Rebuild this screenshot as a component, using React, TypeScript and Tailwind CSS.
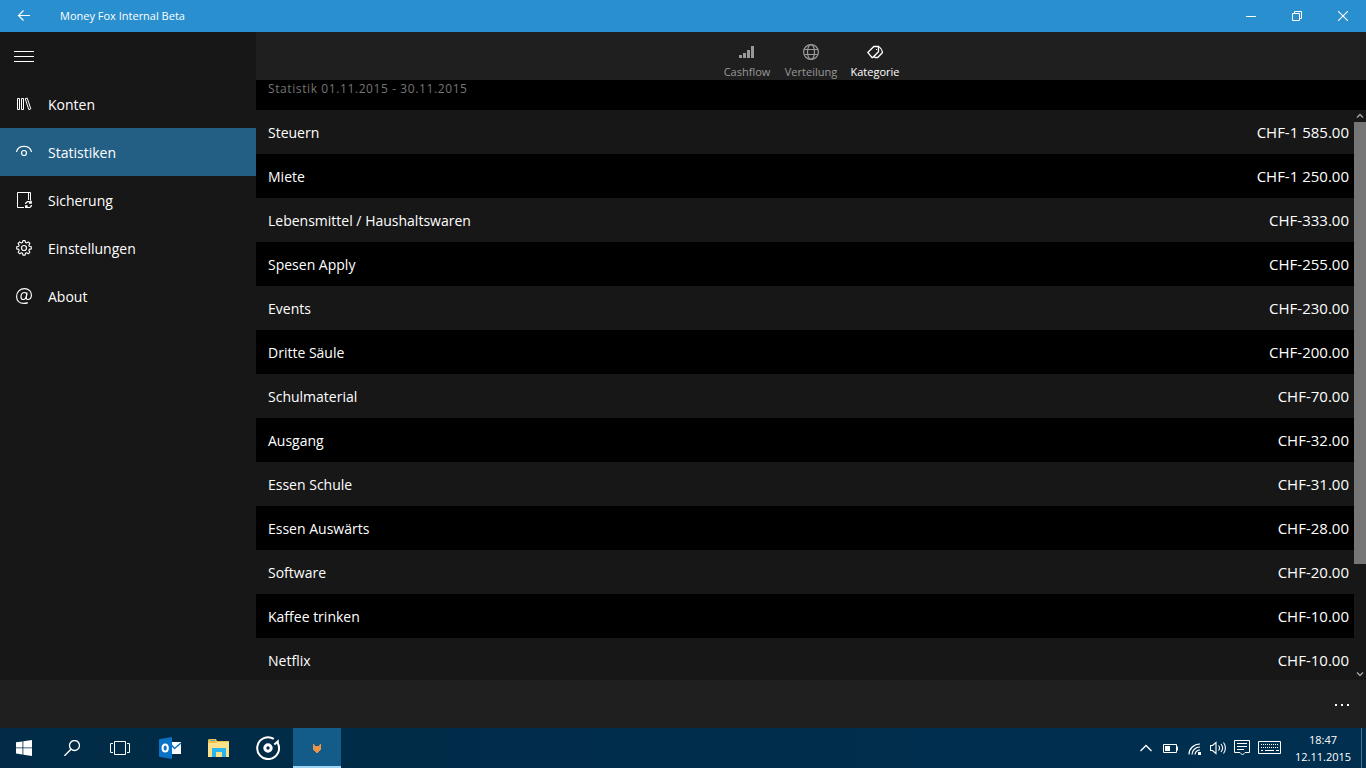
import type { ReactNode } from 'react';

type IconProps = { children: ReactNode; size?: number; className?: string };

function Icon({ children, size = 16, className = '' }: IconProps) {
  return (
    <svg
      width={size}
      height={size}
      viewBox={`0 0 ${size} ${size}`}
      fill="none"
      stroke="currentColor"
      aria-hidden="true"
      className={`shrink-0 ${className}`}
    >
      {children}
    </svg>
  );
}

const LibraryIcon = () => (
  <Icon>
    <path d="M1.500 2.500h2v11h-2zM5.500 2.500h2v11h-2zM9.200 2.700l2-.6 3.600 10.800-2 .7z" />
  </Icon>
);

const EyeIcon = () => (
  <Icon>
    <path d="M.5 8C1.200 4.300 4.500 2.300 8 2.300S14.800 4.300 15.500 8" strokeWidth="1.200" />
    <circle cx="8" cy="9" r="2.500" strokeWidth="1.200" />
  </Icon>
);

const BackupIcon = () => (
  <Icon>
    <path d="M8 15.500H1.500V.5h13v8M12.500.5v7.500" />
    <path d="M9.500 12a3 3 0 0 1 5.300-1.300M15.500 13a3 3 0 0 1-5.300 1.600M15.200 8.800v2.200h-2.200M9.700 16v-2h2" strokeWidth="1.300" />
  </Icon>
);

const GearIcon = () => (
  <Icon>
    <circle cx="8" cy="8" r="2.500" strokeWidth="1.200" />
    <path
      strokeWidth="1.100"
      strokeLinejoin="round"
      d="M6.900.6h2.200l.4 1.900 1.100.5 1.700-1.100 1.600 1.600-1.100 1.700.5 1.100 2 .5v2.100l-2 .5-.5 1.100 1.100 1.700-1.600 1.600-1.700-1.100-1.100.5-.4 1.900H6.900l-.4-1.900-1.100-.5-1.700 1.100-1.600-1.600 1.100-1.700-.5-1.100-2-.5V6.800l2-.5.5-1.100-1.100-1.700 1.600-1.600L5.400 3l1.100-.5z"
    />
  </Icon>
);

const AtIcon = () => (
  <Icon>
    <path
      strokeWidth="1.200"
      d="M11 4.500l-.8 5c-.2 1.300.4 2 1.500 2 2 0 3.700-1.800 3.700-4.500C15.400 3.300 12.500.6 8.500.6 4 .6.6 4 .6 8.400c0 4.200 3 7 7.200 7 1.600 0 3-.3 4-.8"
    />
    <path strokeWidth="1.200" d="M10.700 6.800c0-1.400-.9-2.300-2.200-2.300-2 0-3.500 1.900-3.500 4.200 0 1.700.8 2.800 2.200 2.800 1.900 0 3.300-2 3.500-4.700z" />
  </Icon>
);

const navigation = [
  { label: 'Konten', icon: <LibraryIcon /> },
  { label: 'Statistiken', icon: <EyeIcon />, active: true },
  { label: 'Sicherung', icon: <BackupIcon /> },
  { label: 'Einstellungen', icon: <GearIcon /> },
  { label: 'About', icon: <AtIcon /> },
];

const tabs = [
  {
    label: 'Cashflow',
    icon: (
      <Icon>
        <path d="M0 11h3v3H0zM4 9h3v5H4zM8 6h3v8H8zM12 2h3v12h-3z" fill="currentColor" stroke="none" />
      </Icon>
    ),
  },
  {
    label: 'Verteilung',
    icon: (
      <Icon>
        <circle cx="8" cy="8" r="7.400" strokeWidth="1.200" />
        <ellipse cx="8" cy="8" rx="3.500" ry="7.400" strokeWidth="1.200" />
        <path d="M1.500 5.500h13M1.500 10.500h13" strokeWidth="1.100" />
      </Icon>
    ),
  },
  {
    label: 'Kategorie',
    active: true,
    icon: (
      <Icon>
        <path d="M.8 8.500l6-6h4.700v5.200l-5.800 5.800H5z" strokeWidth="1.300" />
        <path d="M11.500 2.500c2.200 1.200 3.700 3.300 4 6l-4.800 5H8.200l-1.500-1" strokeWidth="1.300" />
        <path d="M9 5h1v1H9z" fill="currentColor" stroke="none" />
      </Icon>
    ),
  },
];

const categories = [
  { name: 'Steuern', amount: 'CHF-1 585.00' },
  { name: 'Miete', amount: 'CHF-1 250.00' },
  { name: 'Lebensmittel / Haushaltswaren', amount: 'CHF-333.00' },
  { name: 'Spesen Apply', amount: 'CHF-255.00' },
  { name: 'Events', amount: 'CHF-230.00' },
  { name: 'Dritte Säule', amount: 'CHF-200.00' },
  { name: 'Schulmaterial', amount: 'CHF-70.00' },
  { name: 'Ausgang', amount: 'CHF-32.00' },
  { name: 'Essen Schule', amount: 'CHF-31.00' },
  { name: 'Essen Auswärts', amount: 'CHF-28.00' },
  { name: 'Software', amount: 'CHF-20.00' },
  { name: 'Kaffee trinken', amount: 'CHF-10.00' },
  { name: 'Netflix', amount: 'CHF-10.00' },
];

function TitleBar() {
  return (
    <header className="flex h-8 shrink-0 items-center bg-[#298fcf]">
      <button aria-label="Zurück" className="flex h-8 w-12 items-center justify-center">
        <Icon>
          <path d="M14 7.500H2.500M7.500 2.500l-5 5 5 5" strokeWidth="1.200" />
        </Icon>
      </button>
      <h1 className="flex-1 pl-3 text-[11px]">Money Fox Internal Beta</h1>
      <button aria-label="Minimieren" className="flex h-8 w-[46px] items-center justify-center">
        <Icon size={10}>
          <path d="M0 5.500h10" />
        </Icon>
      </button>
      <button aria-label="Wiederherstellen" className="flex h-8 w-[46px] items-center justify-center">
        <Icon size={10}>
          <path d="M.5 2.500h7v7h-7zM2.500 2.500v-2h7v7h-2" />
        </Icon>
      </button>
      <button aria-label="Schliessen" className="flex h-8 w-[46px] items-center justify-center">
        <Icon size={10}>
          <path d="M0 0l10 10M10 0L0 10" strokeWidth="1.100" />
        </Icon>
      </button>
    </header>
  );
}

function Sidebar() {
  return (
    <aside className="w-64 shrink-0 bg-[#171717]">
      <button aria-label="Menü" className="flex size-12 items-center justify-center">
        <Icon size={20}>
          <path d="M0 5.500h20M0 10.500h20M0 15.500h20" />
        </Icon>
      </button>
      <nav>
        {navigation.map((item) => (
          <a
            key={item.label}
            href="#"
            aria-current={item.active ? 'page' : undefined}
            className={`flex h-12 items-center gap-4 pl-4 text-sm ${item.active ? 'bg-[#235f84]' : ''}`}
          >
            {item.icon}
            <span className="pt-0.5">{item.label}</span>
          </a>
        ))}
      </nav>
    </aside>
  );
}

function ScrollBar() {
  return (
    <div className="flex w-3 shrink-0 flex-col bg-[#171717] text-[#a0a0a0]">
      <button aria-label="Nach oben" className="flex h-3 items-center justify-center">
        <Icon size={8}>
          <path d="M1 5.500l3-3 3 3" strokeWidth="1.500" />
        </Icon>
      </button>
      <div className="flex flex-1 flex-col">
        <div className="basis-[81%] bg-[#767676]" />
      </div>
      <button aria-label="Nach unten" className="flex h-3 items-center justify-center">
        <Icon size={8}>
          <path d="M1 2.500l3 3 3-3" strokeWidth="1.500" />
        </Icon>
      </button>
    </div>
  );
}

function Statistics() {
  return (
    <main className="flex min-w-0 flex-1 flex-col bg-black">
      <div className="flex h-12 shrink-0 justify-center bg-[#1f1f1f]">
        {tabs.map((tab) => (
          <button
            key={tab.label}
            className={`flex w-16 flex-col items-center gap-1 pt-3 text-[11px] leading-4 ${tab.active ? 'text-white' : 'text-[#999999]'}`}
          >
            {tab.icon}
            {tab.label}
          </button>
        ))}
      </div>
      <h2 className="h-[30px] shrink-0 pt-px pl-3 text-xs tracking-wider text-[#757575]">
        Statistik 01.11.2015 - 30.11.2015
      </h2>
      <div className="flex min-h-0 flex-1">
        <div className="min-w-0 flex-1 overflow-hidden">
          <table className="w-full text-sm">
            <tbody>
              {categories.map((category) => (
                <tr key={category.name} className="h-11 odd:bg-[#171717]">
                  <td className="pt-0.5 pl-3">{category.name}</td>
                  <td className="pt-0.5 pr-[5px] text-right text-[15px]">{category.amount}</td>
                </tr>
              ))}
            </tbody>
          </table>
        </div>
        <ScrollBar />
      </div>
    </main>
  );
}

function CommandBar() {
  return (
    <div className="flex h-12 shrink-0 justify-end bg-[#1f1f1f]">
      <button aria-label="Mehr" className="flex w-12 items-center justify-center">
        <Icon>
          <path d="M1 8h2v2H1zM7 8h2v2H7zM13 8h2v2h-2z" fill="currentColor" stroke="none" />
        </Icon>
      </button>
    </div>
  );
}

const shellButtons = [
  {
    label: 'Start',
    icon: (
      <Icon>
        <path d="M0 2.300l6.500-.9v6.100H0zM7.300 1.300L16 0v7.500H7.300zM0 8.300h6.500v6.200L0 13.600zM7.300 8.300H16V16l-8.700-1.300z" fill="currentColor" stroke="none" />
      </Icon>
    ),
  },
  {
    label: 'Suchen',
    icon: (
      <Icon>
        <circle cx="10.500" cy="5.500" r="5" strokeWidth="1.300" />
        <path d="M7 9.200L.4 15.800" strokeWidth="1.400" />
      </Icon>
    ),
  },
  {
    label: 'Taskansicht',
    icon: (
      <Icon size={20}>
        <path d="M4.500 3.500h11v13h-11zM3 5.500H.5v9H3M17 5.500h2.500v9H17" />
      </Icon>
    ),
  },
];

const taskbarApps = [
  {
    label: 'Outlook',
    icon: (
      <Icon size={24}>
        <path d="M12 6h11v12H12z" fill="#fff" stroke="none" />
        <path d="M13.500 9l3 3.500L23 7" stroke="#0a73c8" strokeWidth="1.500" />
        <path d="M1 3.200L14 1v22L1 20.800z" fill="#0a73c8" stroke="none" />
        <ellipse cx="7.200" cy="12" rx="2.600" ry="3.500" strokeWidth="2" />
      </Icon>
    ),
  },
  {
    label: 'Explorer',
    icon: (
      <Icon size={24}>
        <path d="M1 4l1-1h7l1 2h12v16H1z" fill="#efc14c" stroke="none" />
        <path d="M3 4h5v1H3z" fill="#3fb4c8" stroke="none" />
        <path d="M1 7h8l1-1h12v15H1z" fill="#fbe08a" stroke="none" />
        <path d="M5 12h14v9h-4v-5H9v5H5z" fill="#28b5ee" stroke="none" />
      </Icon>
    ),
  },
  {
    label: 'Groove-Musik',
    icon: (
      <Icon size={24}>
        <path d="M17.800 2.900A10.900 10.900 0 1 0 21.800 7.200V5.500L18.300 8.500" strokeWidth="2" />
        <circle cx="12" cy="12" r="3.200" strokeWidth="3" />
      </Icon>
    ),
  },
  {
    label: 'Money Fox',
    active: true,
    icon: (
      <Icon>
        <path d="M4 4h1l1 2h4l1-2h1v6h-1v1H10v1H9v1H7v-1H6v-1H5v-1H4z" fill="#e8954a" stroke="none" />
      </Icon>
    ),
  },
];

function Taskbar() {
  return (
    <footer className="flex h-10 shrink-0 items-stretch bg-linear-to-r from-[#012b46] to-[#002f50]">
      <div className="flex">
        {shellButtons.map((button) => (
          <button key={button.label} aria-label={button.label} className="flex w-12 items-center justify-center">
            {button.icon}
          </button>
        ))}
      </div>
      <div className="ml-0.5 flex flex-1 gap-px">
        {taskbarApps.map((app) => (
          <button
            key={app.label}
            aria-label={app.label}
            className={`flex w-12 items-center justify-center ${app.active ? 'bg-[#135c89] shadow-[inset_0_-2px_0_#9fd5f5]' : ''}`}
          >
            {app.icon}
          </button>
        ))}
      </div>
      <div className="flex items-center gap-2">
        <button aria-label="Ausgeblendete Symbole">
          <Icon>
            <path d="M2.500 11l5.500-5.500 5.500 5.500" strokeWidth="1.300" />
          </Icon>
        </button>
        <Icon>
          <path d="M1.500 4.500h13v8h-13zM15.500 6.500v4" />
          <path d="M3 6h5v5H3z" fill="currentColor" stroke="none" />
        </Icon>
        <Icon>
          <path d="M3 14.500C3 8.500 8 4 14 4M6 14.500C6 10.500 9.500 7 14 7M9 14.500c0-2.500 2.500-4.500 5-4.500" strokeWidth="1.200" />
          <path d="M12 12h3v3h-3z" fill="currentColor" stroke="none" />
        </Icon>
        <Icon>
          <path d="M.5 5.500h2L6 2.500v11l-3.500-3h-2zM8.500 5.500c1.300 1.500 1.300 3.500 0 5M11 4c2 2.500 2 5.500 0 8M13.500 2.500c2.500 3 2.500 8 0 11" strokeWidth="1.100" />
        </Icon>
        <Icon>
          <path d="M.5.500h15v12H11l-2.500 2.500L6 12.500H.5zM3 3.500h10M3 6.500h10M3 9.500h7" />
        </Icon>
        <svg width="24" height="16" viewBox="0 0 24 16" fill="none" stroke="currentColor" aria-hidden="true">
          <path d="M.5 1.500h22v12H.5z" />
          <path d="M3 4.500h18M3 7.500h18" strokeDasharray="1 1" />
          <path d="M3 10.500h2M7 10.500h9M18 10.500h3" />
        </svg>
        <time className="w-[66px] text-center text-[11px] leading-[17px]">
          18:47
          <br />
          12.11.2015
        </time>
      </div>
      <button aria-label="Desktop anzeigen" className="ml-[5px] w-[5px] border-l border-[#4d6f87]" />
    </footer>
  );
}

export default function App() {
  return (
    <div className="flex h-screen flex-col overflow-hidden bg-black font-['Segoe_UI','Open_Sans',sans-serif] text-white">
      <TitleBar />
      <div className="flex min-h-0 flex-1">
        <Sidebar />
        <Statistics />
      </div>
      <CommandBar />
      <Taskbar />
    </div>
  );
}
